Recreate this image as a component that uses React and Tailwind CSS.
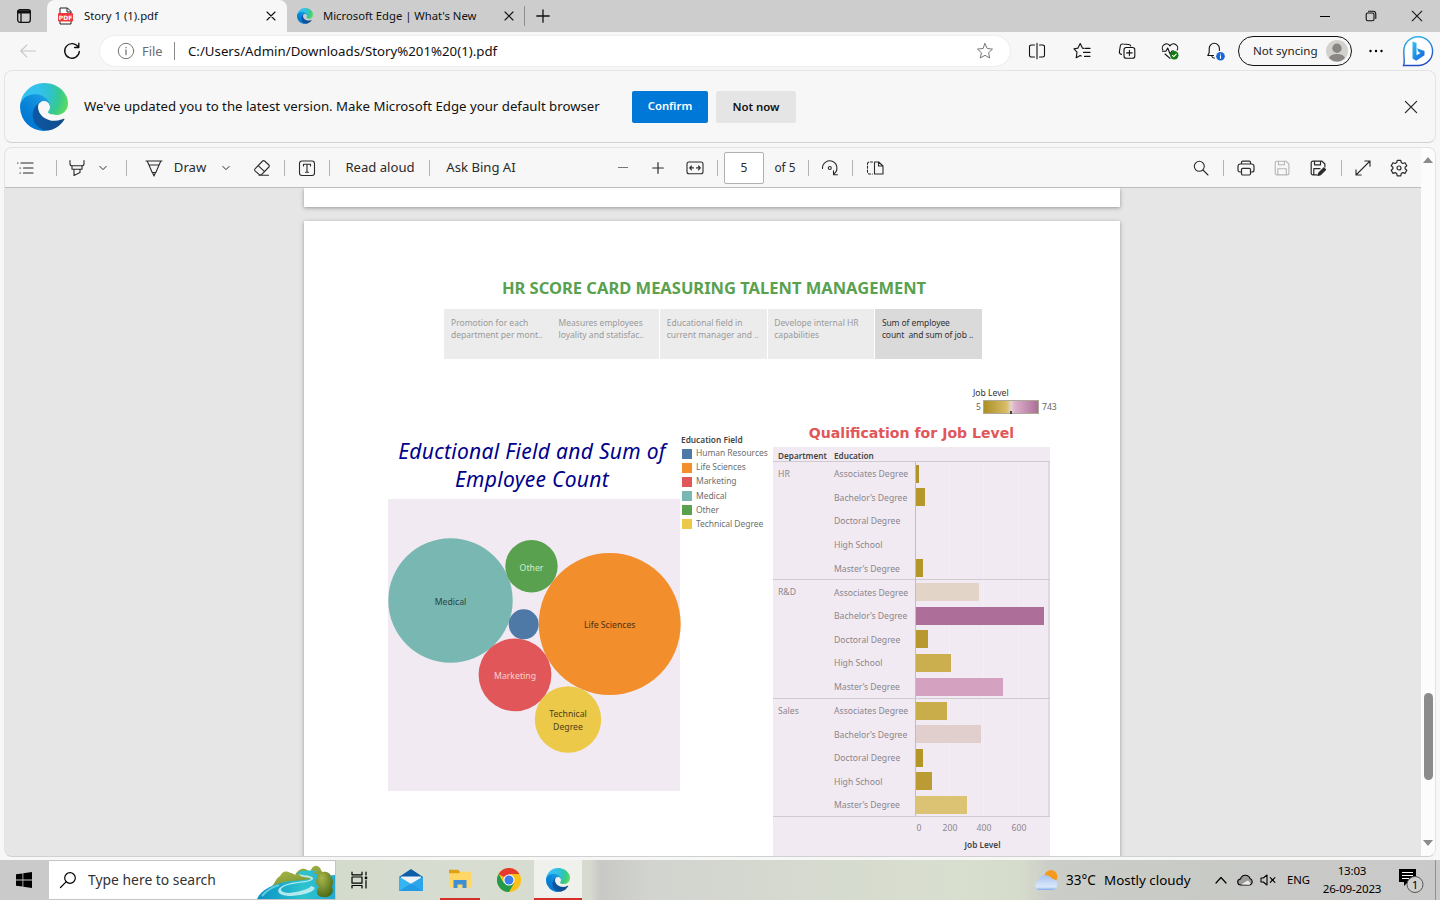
import React from "react";

function Ico({ s = 18, vb = 18, w = 1.1, className = "", children }) {
  return (
    <svg width={s} height={s} viewBox={`0 0 ${vb} ${vb}`} fill="none" stroke="currentColor" strokeWidth={w} strokeLinecap="round" strokeLinejoin="round" className={`shrink-0 ${className}`}>
      {children}
    </svg>
  );
}

function Cell({ className = "", children }) {
  return <div className={`flex shrink-0 items-center justify-center whitespace-nowrap ${className}`}>{children}</div>;
}

function Sep({ className = "" }) {
  return (
    <Cell className={className}>
      <div className="h-4 w-px bg-[#b4b4b4]" />
    </Cell>
  );
}

function EdgeLogo({ size, id }) {
  return (
    <svg width={size} height={size} viewBox="0 0 256 256" className="shrink-0">
      <defs>
        <linearGradient id={`${id}a`} x1="63" y1="177" x2="241" y2="177" gradientUnits="userSpaceOnUse">
          <stop offset="0" stopColor="#0c59a4" />
          <stop offset="1" stopColor="#114a8b" />
        </linearGradient>
        <linearGradient id={`${id}b`} x1="157" y1="100" x2="46" y2="222" gradientUnits="userSpaceOnUse">
          <stop offset="0" stopColor="#1b9de2" />
          <stop offset=".16" stopColor="#1595df" />
          <stop offset=".67" stopColor="#0680d7" />
          <stop offset="1" stopColor="#0078d4" />
        </linearGradient>
        <radialGradient id={`${id}c`} cx="26" cy="47" r="240" gradientUnits="userSpaceOnUse">
          <stop offset="0" stopColor="#35c1f1" />
          <stop offset=".3" stopColor="#34c1ed" />
          <stop offset=".55" stopColor="#2fc2cf" />
          <stop offset=".78" stopColor="#36c98f" />
          <stop offset="1" stopColor="#5fdc5c" />
        </radialGradient>
      </defs>
      <path fill={`url(#${id}a)`} d="M231.07 190.54c-3.4 1.8-6.9 3.35-10.53 4.7a101.8 101.8 0 01-35.9 6.46c-47.31 0-88.54-32.54-88.54-74.32A31.48 31.48 0 01112.5 100c-42.8 1.8-53.8 46.4-53.8 72.53 0 73.88 68.1 81.37 82.76 81.37 7.91 0 19.84-2.3 27-4.56l1.31-.44a128.34 128.34 0 0066.6-52.8 4 4 0 00-5.3-5.56z" />
      <path fill={`url(#${id}b)`} d="M105.73 241.42a79.2 79.2 0 01-22.74-21.34 80.72 80.72 0 0129.54-120.27c3.12-1.48 8.45-4.1 15.54-4a32.36 32.36 0 0125.69 13 31.9 31.9 0 016.36 18.67c0-.21 24.46-79.6-80-79.6-43.9 0-80 41.66-80 78.2a130.15 130.15 0 0012.11 56 128 128 0 00156.38 67.1 75.55 75.55 0 01-62.78-8z" />
      <path fill={`url(#${id}c)`} d="M152.33 149c-.81 1.07-3.3 2.5-3.3 5.68 0 2.6 1.7 5.1 4.7 7.2 14.4 10 41.5 8.7 41.5 8.7a59.56 59.56 0 0030.3-8.36A61.38 61.38 0 00256 109.19c.26-22.4-8-37.3-11.32-43.93C223.5 23.98 177.8 0 128.1 0A128 128 0 000 126.2c.48-36.54 36.8-66.05 80-66.05 3.5 0 23.46.34 42 10.07 16.34 8.58 24.9 18.94 30.85 29.21 6.18 10.67 7.28 24.15 7.28 29.52s-2.74 13.33-7.8 20.05z" />
    </svg>
  );
}

const Close = ({ s = 10, w = 1.1 }) => (
  <Ico s={s} vb={10} w={w}><path d="M1 1l8 8M9 1L1 9" /></Ico>
);

function TabStrip() {
  return (
    <div className="flex h-8 items-stretch bg-[#cdcdcd] text-[11.3px] text-[#111]">
      <Cell className="w-[47px]">
        <Ico s={16} vb={16} w={1.3}>
          <rect x="1.7" y="1.7" width="12.6" height="12.6" rx="2.2" />
          <path d="M2 3.2h12M2 4.6h12" strokeWidth="2" />
          <path d="M5 5v9" />
        </Ico>
      </Cell>
      <div className="flex w-[240px] items-center rounded-t-lg bg-[#f7f7f7] pl-[10px]">
        <svg width="17" height="18" viewBox="0 0 17 18" className="shrink-0">
          <path d="M3 7V1h7.5l3.5 3.5V17H3z" fill="#fff" stroke="#222" />
          <path d="M10 1v4h4" fill="none" stroke="#222" />
          <rect x="1" y="6" width="15" height="8.5" rx="1" fill="#f0383c" />
          <text x="8.5" y="12.6" textAnchor="middle" fontSize="6" fontWeight="700" fill="#fff" fontFamily="DejaVu Sans">PDF</text>
        </svg>
        <span className="ml-[10px] w-[182px] whitespace-nowrap">Story 1 (1).pdf</span>
        <Close />
      </div>
      <div className="flex w-[238px] items-center pl-[10px]">
        <EdgeLogo size={16} id="t" />
        <span className="ml-[10px] w-[182px] whitespace-nowrap tracking-[-0.02px]">Microsoft Edge | What's New</span>
        <Close />
        <div className="ml-[10px] h-5 w-px bg-[#8d8d8d]" />
      </div>
      <Cell className="w-9">
        <Ico s={14} vb={14} w={1.3}><path d="M7 .8v12.4M.8 7h12.4" /></Ico>
      </Cell>
      <div className="ml-auto flex">
        <Cell className="w-[46px]"><div className="h-px w-[10px] bg-black" /></Cell>
        <Cell className="w-[46px]">
          <Ico s={12} vb={12} w={1.1}>
            <rect x="1.2" y="3" width="7.8" height="7.8" rx="1.5" />
            <path d="M3.5 1.2H8A2.8 2.8 0 0 1 10.8 4v4.5" />
          </Ico>
        </Cell>
        <Cell className="w-[46px]"><Close s={12} w={0.9} /></Cell>
      </div>
    </div>
  );
}

function AddressRow() {
  return (
    <div className="flex h-[38px] items-center bg-[#f7f7f7]">
      <Cell className="w-14 text-[#c6c6c6]"><Ico s={18}><path d="M16.5 9H2M8 2.8L1.8 9 8 15.2" /></Ico></Cell>
      <Cell className="w-8 text-[#111]">
        <Ico s={18} w={1.4}><path d="M15.3 5.2A7.3 7.3 0 1 0 16.3 9.5M15.8 1.3v4.2h-4.2" /></Ico>
      </Cell>
      <div className="ml-3 flex h-[30px] w-[910px] items-center rounded-full bg-white shadow-[0_0_2px_rgba(0,0,0,0.12)]">
        <Ico s={18} w={1} className="ml-[17px] text-[#767676]">
          <circle cx="9" cy="9" r="7.7" />
          <path d="M9 8v4.7M9 5.4v.3" strokeWidth="1.3" />
        </Ico>
        <span className="ml-[7px] w-8 pt-px text-[12.8px] text-[#6b6b6b]">File</span>
        <div className="h-[18px] w-px bg-[#8a8a8a]" />
        <span className="ml-[13px] pt-px text-[13.25px] whitespace-nowrap text-[#111]">C:/Users/Admin/Downloads/Story%201%20(1).pdf</span>
        <Ico s={18} w={1} className="mr-4 ml-auto text-[#767676]">
          <path d="M9 1.6l2.2 4.9 5.3.6-3.9 3.6 1.1 5.3L9 13.3 4.3 16l1.1-5.3L1.5 7.1l5.3-.6z" />
        </Ico>
      </div>
      <div className="ml-[5px] flex text-[#111]">
        <Cell className="w-11">
          <Ico s={18}><path d="M6.5 3H3.2A1.7 1.7 0 0 0 1.5 4.7v8.6A1.7 1.7 0 0 0 3.2 15h3.3M11.5 3h3.3a1.7 1.7 0 0 1 1.7 1.7v8.6a1.7 1.7 0 0 1-1.7 1.7h-3.3M9 1.2v15.6" /></Ico>
        </Cell>
        <Cell className="w-[46px]">
          <Ico s={18}><path d="M11.2 6.4l-1.8-.3L7.2 1.6 5 6.1l-4 .7 3 3.4-.8 5.6 4-2.2 1 .5M12.5 6.4H17M10.5 10.4H17M11.5 14.4H17" /></Ico>
        </Cell>
        <Cell className="w-[43px]">
          <Ico s={18}><rect x="6" y="5.5" width="10.8" height="10.8" rx="2.3" /><path d="M11.4 8.2v5.4M8.7 10.9h5.4M3.5 12.4A2.5 2.5 0 0 1 1.4 9.6L2.3 4a2.4 2.4 0 0 1 2.8-2l5.6.5a2.3 2.3 0 0 1 2 1.5" /></Ico>
        </Cell>
        <Cell className="w-11">
          <Ico s={18}>
            <path d="M1.8 8A4 4 0 0 1 9 4a4 4 0 0 1 7.2 4M1.5 9.3h3.4L6.7 6l2.4 6 1.8-3h2M4 12l5 4.4" />
            <circle cx="13.3" cy="13.3" r="4.2" fill="#107c10" stroke="none" />
            <path d="M11.5 13.5l1.3 1.2 2.4-2.6" stroke="#fff" />
          </Ico>
        </Cell>
        <Cell className="w-[46px]">
          <Ico s={20} vb={20}>
            <path d="M8.5 14.5H2.8l1.4-3V7.4a5.1 5.1 0 0 1 10.2 0v2M6.8 15a2.4 2.4 0 0 0 2.6 2" />
            <circle cx="15.5" cy="15.2" r="4.3" fill="#1a66d6" stroke="none" />
            <path d="M15.5 14.8v2.4M15.5 13v.1" stroke="#fff" />
          </Ico>
        </Cell>
      </div>
      <div className="flex h-[30px] w-[114px] items-center rounded-full border border-[#111] pl-[14px] text-[11.6px] text-[#222]">
        <span className="w-[73px] whitespace-nowrap">Not syncing</span>
        <svg width="22" height="22" viewBox="0 0 22 22" className="shrink-0">
          <defs><clipPath id="av"><circle cx="11" cy="11" r="10.5" /></clipPath></defs>
          <circle cx="11" cy="11" r="11" fill="#d3d1ce" />
          <g clipPath="url(#av)" fill="#8a8684"><circle cx="11" cy="8.2" r="4.7" /><ellipse cx="11" cy="18.6" rx="8" ry="4.6" /></g>
        </svg>
      </div>
      <Cell className="w-12"><Ico s={16} vb={16}><g fill="currentColor" stroke="none"><circle cx="2.5" cy="8" r="1.2" /><circle cx="8" cy="8" r="1.2" /><circle cx="13.5" cy="8" r="1.2" /></g></Ico></Cell>
      <Cell className="ml-[2px] w-8">
        <svg width="32" height="32" viewBox="0 0 32 32">
          <defs>
            <linearGradient id="bo" x1="0" y1="0" x2=".3" y2="1"><stop offset="0" stopColor="#2fc0ea" /><stop offset="1" stopColor="#2349c9" /></linearGradient>
            <linearGradient id="bi" x1="0" y1="0" x2="1" y2="1"><stop offset="0" stopColor="#36c5f3" /><stop offset=".5" stopColor="#1c8fe6" /><stop offset="1" stopColor="#1f5fe0" /></linearGradient>
          </defs>
          <path d="M1.5 30.5c1.5-3 .3-6 .3-14.5A14.4 14.4 0 1 1 16.2 30.5z" fill="#fff" stroke="url(#bo)" strokeWidth="1.4" />
          <path d="M10.5 6.5l4 1.4v12.4l4-2.3-2-1-1.5-3.8 7.5 2.7v4.3L14.2 25.8l-3.7-2.4z" fill="url(#bi)" />
        </svg>
      </Cell>
    </div>
  );
}

function Banner() {
  return (
    <div className="mx-1 flex h-[73px] w-[1432px] items-center rounded-lg border border-[#e3e3e3] border-b-[#d2d2d2] bg-[#f7f7f7] pl-[15px]">
      <EdgeLogo size={48} id="b" />
      <span className="ml-4 w-[548px] text-[13.22px] whitespace-nowrap text-[#111]">We've updated you to the latest version. Make Microsoft Edge your default browser</span>
      <button className="h-8 w-[76px] rounded-[2px] bg-[#0078d7] text-[11.3px] font-semibold text-white">Confirm</button>
      <button className="ml-2 h-8 w-20 rounded-[2px] bg-[#e5e5e5] text-[11.4px] font-semibold text-[#111]">Not now</button>
      <Cell className="mr-[17px] ml-auto text-[#222]"><Close s={14} w={0.85} /></Cell>
    </div>
  );
}

const Chevron = () => <Ico s={8} vb={8} w={1}><path d="M.8 2.4L4 5.6l3.2-3.2" /></Ico>;

function PdfToolbar() {
  return (
    <div className="flex h-10 shrink-0 items-stretch border-b border-[#bdbdbd] bg-[#f7f7f7] pr-[6px] text-[13.1px] text-[#2b2b2b]">
      <Cell className="w-[43px]"><Ico s={18} w={1.2} className="-ml-1"><path d="M5 4h12M7.5 9H17M7.5 14H17M1.5 4h.4M4 9h.4M4 14h.4" /></Ico></Cell>
      <Sep className="w-4" />
      <Cell className="w-[26px]"><Ico s={18}><path d="M2 1.5v3.2a2 2 0 0 0 2 2h10a2 2 0 0 0 2-2V1.5M4 6.7v3.6h10V6.7M6 10.3v6.2l6-3v-3.2" /></Ico></Cell>
      <Cell className="w-[26px]"><Chevron /></Cell>
      <Sep className="w-5" />
      <Cell className="w-9"><Ico s={18}><path d="M1 2h16M2.2 2l5 11.5h3.6l5-11.5M4 6h10M7.5 13.5L9 17l1.5-3.5" /></Ico></Cell>
      <Cell className="w-9">Draw</Cell>
      <Cell className="w-9"><Chevron /></Cell>
      <Cell className="w-9"><Ico s={18}><path d="M6 16.2h9.5M6.3 15.7L2 11.8a1.4 1.4 0 0 1 0-2L9.6 2a1.4 1.4 0 0 1 2 0l4.3 4a1.4 1.4 0 0 1 0 2L8.5 15.7zM5.2 6.6l6.4 6" /></Ico></Cell>
      <Sep className="w-2" />
      <Cell className="w-[38px]"><Ico s={18}><rect x="1.5" y="2" width="15" height="14.5" rx="2.5" /><path d="M5.5 7V5.3h7V7M9 5.3v8M7.5 13.3h3" /></Ico></Cell>
      <Sep className="w-[6px]" />
      <Cell className="w-[96px]">Read aloud</Cell>
      <Sep className="w-[2px]" />
      <Cell className="w-[102px]">Ask Bing AI</Cell>
      <Cell className="ml-[73px] w-9"><div className="h-[1.5px] w-[10px] bg-[#777]" /></Cell>
      <Cell className="w-[34px]"><Ico s={12} vb={12} w={1.2}><path d="M6 .7v10.6M.7 6h10.6" /></Ico></Cell>
      <Cell className="w-10"><Ico s={18} w={1.1}><rect x="1" y="3" width="16" height="11.8" rx="2" /><path d="M3.8 8.9h3.7M10.5 8.9h3.7M5.5 7L3.7 8.9l1.8 1.9M12.5 7l1.8 1.9-1.8 1.9" /></Ico></Cell>
      <Sep className="w-1" />
      <Cell className="ml-[5px] w-10"><div className="flex h-8 w-10 items-center justify-center rounded-[2px] border border-[#b0b0b0] bg-white text-[12px]">5</div></Cell>
      <Cell className="w-[42px] text-[11.8px]">of 5</Cell>
      <Sep className="w-1" />
      <Cell className="w-10"><Ico s={18}><path d="M1.5 9.5A7.2 7.2 0 1 1 12.8 15M12.5 11.8v4h4" /><circle cx="8.8" cy="9" r="1.5" /></Ico></Cell>
      <Sep className="w-1" />
      <Cell className="w-[42px]"><Ico s={18}><path d="M8.5 3h4.2L17 7v8H8.5zM12.5 3v4H17" /><path d="M6.5 3H3.2A1.7 1.7 0 0 0 1.5 4.7v8.6A1.7 1.7 0 0 0 3.2 15h3.3" strokeDasharray="2.2 1.8" /></Ico></Cell>
      <div className="ml-auto flex">
        <Cell className="w-10"><Ico s={16} vb={16}><circle cx="6.3" cy="6.3" r="5" /><path d="M10 10l5 5" /></Ico></Cell>
        <Sep className="w-1" />
        <Cell className="w-[42px]"><Ico s={18} w={1.2}><path d="M4.5 5V3.5A1.3 1.3 0 0 1 5.8 2.2h6.4a1.3 1.3 0 0 1 1.3 1.3V5M4.5 13H3a2 2 0 0 1-2-2V7.2A2.2 2.2 0 0 1 3.2 5h11.6A2.2 2.2 0 0 1 17 7.2V11a2 2 0 0 1-2 2h-1.5" /><rect x="4.5" y="9.3" width="9" height="6.7" rx="1.2" /></Ico></Cell>
        <Cell className="w-[30px] text-[#b5b5b5]"><Ico s={18}><path d="M2.2 3.9a1.7 1.7 0 0 1 1.7-1.7H13L15.9 5v9.2a1.7 1.7 0 0 1-1.7 1.7H3.9a1.7 1.7 0 0 1-1.7-1.7zM5.5 2.2v3.6h6V2.2M4.8 15.9V9.7h8.5v6.2" /></Ico></Cell>
        <Cell className="w-[42px]"><Ico s={18} w={1.2}><path d="M8 15.9H3.9a1.7 1.7 0 0 1-1.7-1.7V3.9a1.7 1.7 0 0 1 1.7-1.7H13L15.9 5v3M5.5 2.2v3.6h6V2.2M4.8 15.9V9.7h6.2" /><path d="M9 16.5l.8-2.6 5-5 1.8 1.8-5 5z" fill="currentColor" /></Ico></Cell>
        <Sep className="w-1" />
        <Cell className="w-10"><Ico s={18}><path d="M2 16L16 2M10.8 2H16v5.2M2 10.8V16h5.2" /></Ico></Cell>
        <Cell className="w-8"><Ico s={18} w={1.2}><circle cx="9" cy="9" r="2" /><path d="M7.2 1.3h3.6l.5 2.3 1.5.9 2.2-.8 1.8 3.1-1.7 1.5v1.5l1.7 1.5-1.8 3.1-2.2-.8-1.5.9-.5 2.3H7.2l-.5-2.3-1.5-.9-2.2.8-1.8-3.1 1.7-1.5V8.3L1.2 6.8 3 3.7l2.2.8 1.5-.9z" /></Ico></Cell>
      </div>
    </div>
  );
}

const story = [
  ["Promotion for each", "department per mont.."],
  ["Measures employees", "loyality and statisfac.."],
  ["Educational field in", "current manager and .."],
  ["Develope internal HR", "capabilities"],
  ["Sum of employee", "count  and sum of job .."],
];

function StoryPoints() {
  return (
    <div className="ml-[140px] flex h-[50px] w-[538px] text-[8.5px] leading-3 text-[#9a9a9a]">
      {story.map(([a, b], i) => (
        <div
          key={a}
          className={`w-[107.6px] shrink-0 pt-2 whitespace-pre ${i === 4 ? "border-l border-white bg-[#dadada] pl-[6.5px] tracking-[-0.1px] text-[#333]" : i > 1 ? "border-l border-white bg-[#ececec] pl-[6.5px]" : "bg-[#ececec] pl-[7px]"}`}
        >
          {a}
          <br />
          {b}
        </div>
      ))}
    </div>
  );
}

const bubbles = [
  { x: 62.5, y: 101.5, r: 62.2, c: "#78b7b2", t: ["Medical"], f: "#2c4341" },
  { x: 143.5, y: 67.3, r: 26.2, c: "#59a14f", t: ["Other"], f: "#d3ecd0" },
  { x: 135.7, y: 125.3, r: 15, c: "#4e79a7", t: [], f: "" },
  { x: 221.7, y: 125, r: 71, c: "#f28e2c", t: ["Life Sciences"], f: "#50300f" },
  { x: 127, y: 175.8, r: 36.4, c: "#e15759", t: ["Marketing"], f: "#f9d0d0" },
  { x: 180, y: 220.5, r: 33.2, c: "#ecc948", t: ["Technical", "Degree"], f: "#4c4118" },
];

function BubbleChart() {
  return (
    <div className="w-[292px] shrink-0 pt-[51px]">
      <h2 className="h-[62px] pr-1 text-center text-[21px] leading-7 tracking-[0.3px] text-[#00008b] italic">
        <span className="-mx-4 block whitespace-nowrap">Eductional Field and Sum of<br />Employee Count</span>
      </h2>
      <svg width="293" height="292" viewBox="0 0 293 292" className="block overflow-visible" fontFamily="'Noto Sans', sans-serif" fontSize="8.7">
        <rect width="292" height="292" fill="#f2eaf2" />
        {bubbles.map((b) => (
          <g key={b.c}>
            <circle cx={b.x} cy={b.y} r={b.r} fill={b.c} />
            {b.t.map((t, i) => (
              <text key={t} x={b.x} y={b.y + 4.3 + (b.t.length > 1 ? i * 13 - 7 : 0)} textAnchor="middle" fill={b.f}>{t}</text>
            ))}
          </g>
        ))}
      </svg>
    </div>
  );
}

const fields = [
  ["Human Resources", "bg-[#4e79a7]"],
  ["Life Sciences", "bg-[#f28e2c]"],
  ["Marketing", "bg-[#e15759]"],
  ["Medical", "bg-[#78b7b2]"],
  ["Other", "bg-[#59a14f]"],
  ["Technical Degree", "bg-[#ecc948]"],
];

function FieldLegend() {
  return (
    <div className="w-[93px] shrink-0 pt-[48px] pl-px text-[8.5px] whitespace-nowrap text-[#6e6e6e]">
      <div className="h-[12px] text-[8.3px] leading-[12px] font-semibold text-[#444]">Education Field</div>
      {fields.map(([name, color]) => (
        <div key={name} className="flex h-[14.1px] items-center pt-px pl-px">
          <div className={`h-[10px] w-[10px] ${color}`} />
          <span className="ml-[4px] leading-none tracking-[-0.06px]">{name}</span>
        </div>
      ))}
    </div>
  );
}

const degrees = ["Associates Degree", "Bachelor’s Degree", "Doctoral Degree", "High School", "Master’s Degree"];
const groups = [
  { name: "HR", bars: [[3, "#ae942c"], [9, "#b5982c"], [0, "#b3b3a8"], [0, "#b3b3a8"], [7, "#b4972b"]] },
  { name: "R&D", bars: [[63, "#e2d4c6"], [128, "#ad6f99"], [12, "#b8992f"], [35, "#cbaf4e"], [87, "#d4a1c1"]] },
  { name: "Sales", bars: [[31, "#c9ad4b"], [65, "#e1cfcd"], [7, "#b49628"], [16, "#bb9c34"], [51, "#dcc273"]] },
];

function QualificationChart() {
  return (
    <div className="w-[290px] shrink-0 text-[8.65px] whitespace-nowrap text-[#8b868c]">
      <div className="h-[36px] pl-[200px]">
        <div className="h-[14px] text-[8.6px] leading-[14px] text-[#333]">Job Level</div>
        <div className="flex h-[14px] items-center leading-none text-[#666]">
          <span className="w-[10px] pl-[3px]">5</span>
          <div className="relative h-[14px] w-[56px] border border-[#aca99b] bg-[linear-gradient(90deg,#ac8f24,#d9bd68_42%,#e4d5d0_50%,#dbaecb_58%,#ad6f99)]">
            <div className="absolute bottom-[-1px] left-[26px] h-[3px] w-[2px] bg-[#444]" />
          </div>
          <span className="ml-[3px]">743</span>
        </div>
      </div>
      <h2 className="h-[25px] w-[277px] text-center font-['DejaVu_Sans'] text-[14.1px] leading-[22px] font-bold text-[#e15759]">Qualification for Job Level</h2>
      <div className="w-[277px] bg-[#f2eaf2] pb-8">
        <div className="flex h-[14px] pt-[2px] pl-[5px] text-[8.2px] leading-[13px] font-semibold text-[#444]">
          <span className="w-[56px]">Department</span>
          <span>Education</span>
        </div>
        {groups.map((g) => (
          <div key={g.name} className="flex h-[118.4px] border-t border-[#cfcacf]">
            <div className="w-[61px] pt-[6px] pl-[5px] leading-[13px]">{g.name}</div>
            <div className="w-[81px]">
              {degrees.map((d) => (
                <div key={d} className="flex h-[23.6px] items-center pt-[2px]">{d}</div>
              ))}
            </div>
            <div className="w-[135px] border-r-2 border-l border-r-[#e0d9e0] border-l-[#c2bcc2] bg-[linear-gradient(90deg,transparent_33px,#f4edf4_33px,#f4edf4_34px,transparent_34px,transparent_67px,#f4edf4_67px,#f4edf4_68px,transparent_68px,transparent_102px,#f4edf4_102px,#f4edf4_103px,transparent_103px)]">
              {g.bars.map(([w, c], i) => (
                <div key={i} className="flex h-[23.6px] items-center">
                  <div className="h-[18px]" style={{ width: w, background: c }} />
                </div>
              ))}
            </div>
          </div>
        ))}
        <div className="flex border-t border-[#cfcacf] pt-[5px] pl-[129px] leading-[13px]">
          <span className="w-[34px] text-center">0</span>
          <span className="w-[28px] text-center">200</span>
          <span className="ml-[6px] w-[28px] text-center">400</span>
          <span className="ml-[7px] w-[28px] text-center">600</span>
        </div>
        <div className="pt-[3px] pl-[142px] text-center text-[8.3px] leading-[13px] font-semibold text-[#444]">Job Level</div>
      </div>
    </div>
  );
}

function Viewer() {
  return (
    <div className="mx-1 mt-1 flex h-[710px] w-[1432px] shrink-0 overflow-hidden rounded-lg border border-[#e3e3e3] border-b-[#d0d0d0] bg-[#e6e6e6]">
      <div className="flex w-[1416px] flex-col">
        <PdfToolbar />
        <div className="flex grow flex-col overflow-hidden pl-[299px] font-['Noto_Sans',sans-serif]">
          <div className="h-[19px] w-[816px] shrink-0 bg-white shadow-[0_1px_4px_rgba(0,0,0,0.35)]" />
          <div className="mt-[14px] h-[1000px] w-[816px] shrink-0 bg-white shadow-[0_1px_4px_rgba(0,0,0,0.35)]">
            <h1 className="pt-[53px] pl-[4px] text-center text-[16.5px] leading-[27px] font-bold text-[#59a14f]">HR SCORE CARD MEASURING TALENT MANAGEMENT</h1>
            <div className="h-[8px]" />
            <StoryPoints />
            <div className="mt-[27px] ml-[84px] flex">
              <BubbleChart />
              <FieldLegend />
              <QualificationChart />
            </div>
          </div>
        </div>
      </div>
      <div className="flex w-[14px] flex-col items-center bg-[#fcfcfc]">
        <svg width="10" height="6" viewBox="0 0 10 6" className="mt-[9px] shrink-0"><path d="M0 6l5-6 5 6z" fill="#8b8b8b" /></svg>
        <div className="mt-[530px] h-[87px] w-[9px] shrink-0 rounded-full bg-[#8b8b8b]" />
        <svg width="10" height="6" viewBox="0 0 10 6" className="mt-[60px] shrink-0"><path d="M0 0l5 6 5-6z" fill="#8b8b8b" /></svg>
      </div>
    </div>
  );
}

function Taskbar() {
  return (
    <div className="mt-[3px] flex h-10 shrink-0 items-stretch bg-[linear-gradient(90deg,#cacaca_0,#cacaca_335px,#d3dbcc_336px,#d8ddd2_480px,#d6dacf_590px,#c8c9c6_600px,#d2d4cf_650px,#d9dfcf_960px,#d6dccb_1020px,#cbcdc8_1050px,#c8cac6_1200px,#c9c9c9_1440px)] text-black">
      <Cell className="w-[49px]">
        <svg width="16" height="16" viewBox="0 0 16 16" className="-ml-[2px]"><path d="M0 2.3l6.500-.9v6.200H0zM7.300 1.300L16 0v7.600H7.300zM0 8.400h6.500v6.200L0 13.700zM7.300 8.400H16V16l-8.700-1.300z" /></svg>
      </Cell>
      <div className="flex w-[287px] items-center overflow-hidden border border-l-0 border-[#c4c4c4] bg-white">
        <Ico s={18} className="ml-[10px]" w={1.2}><circle cx="11" cy="7" r="5.3" /><path d="M7.3 10.7L1.5 16.5" /></Ico>
        <span className="ml-[11px] pt-px text-[13.9px] whitespace-nowrap text-[#333]">Type here to search</span>
        <svg width="78" height="38" viewBox="0 0 78 38" className="ml-auto shrink-0">
          <defs>
            <linearGradient id="hill" x1="0" y1="0" x2="0.6" y2="1"><stop offset="0" stopColor="#b5c04c" /><stop offset="1" stopColor="#6b8a2c" /></linearGradient>
            <linearGradient id="riv" x1="0" y1="0" x2="1" y2="0"><stop offset="0" stopColor="#0a8fc4" /><stop offset=".6" stopColor="#2cc4cf" /><stop offset="1" stopColor="#23a9d0" /></linearGradient>
            <radialGradient id="bush" cx=".35" cy=".25" r=".8"><stop offset="0" stopColor="#a9b649" /><stop offset="1" stopColor="#4c6a17" /></radialGradient>
          </defs>
          <path d="M38 14c3-6 10-9 14-3l-6 8z" fill="#8fa63c" />
          <path d="M14 26c3-2 5-9 9-11 3-6 7-5 11-3 4 1 6 4 10 4l8-2c2-6 4-10 8-9 4 1 4 5 7 9l6 4v12H14z" fill="url(#hill)" />
          <path d="M78 14v24H0c4-10 18-16 34-18 10-1 21-1 22-4 0-2-15-1-15-4s12-3 20-2c-9 2 0 3 4 5z" fill="url(#riv)" />
          <path d="M42 13c4 2 15 1 14 5-2 4-17 3-28 7-7 3-4 7 4 7 9-1 21-4 22-7 10 2-2 9-20 10-12 0-16-5-10-9 8-6 28-5 30-8 0-2-12-1-12-5z" fill="#b4e9ee" />
          <path d="M5 35c5-6 10-9 17-11" fill="none" stroke="#5ccbdc" strokeWidth="2" />
          <path d="M60 17c-1-7 13-9 14-1 3 3 2 7 1 10 3 7-3 11-9 10-6 0-8-6-4-10-3-3-4-5-2-9z" fill="url(#bush)" />
        </svg>
      </div>
      <Cell className="w-12">
        <Ico s={18} w={1.2}><path d="M1 1.2v2.6h10V1.2M1 17v-2.5h10V17M1 6h10v6.2H1zM15 1v3M15 9.5V17" /><path d="M13.8 5.6h2.4v2.6h-2.4z" fill="currentColor" stroke="none" /></Ico>
      </Cell>
      <Cell className="w-[54px]">
        <svg width="24" height="24" viewBox="0 0 24 24">
          <path d="M0 9L12 1l12 8v4H0z" fill="#0a5fa8" /><path d="M2 8.5h20V18H2z" fill="#eef3f8" />
          <path d="M0 8.5l13 8L0 23z" fill="#35b4f2" /><path d="M24 8.5L0 23h24z" fill="#2ba5ec" /><path d="M12 15.8L24 23H0z" fill="#1c8fdc" opacity=".5" />
        </svg>
      </Cell>
      <Cell className="ml-[2px] w-10 border-b-[2px] border-[#d32f2b]">
        <svg width="22" height="20" viewBox="0 0 22 20"><path d="M0 .8h9l2 2.2h11V18H0z" fill="#e0a010" /><path d="M0 4.3h10l1.5-1.5H22V18.5H0z" fill="#ffd767" /><path d="M4.5 11h13v8h-4v-3.5h-5V19h-4z" fill="#3f8fd6" /></svg>
      </Cell>
      <Cell className="w-[57px]">
        <svg width="24" height="24" viewBox="0 0 24 24">
          <circle cx="12" cy="12" r="12" fill="#fbc116" />
          <path d="M12 12L1.6 6A12 12 0 0 1 22.4 6H12z" fill="#e33b2e" />
          <path d="M1.6 6A12 12 0 0 0 12 24l5.2-9L12 12l-5.2 3z" fill="#229a4b" />
          <circle cx="12" cy="12" r="5.6" fill="#fff" /><circle cx="12" cy="12" r="4.5" fill="#3b7ded" />
        </svg>
      </Cell>
      <Cell className="-ml-[3px] w-12 border-b-[2px] border-[#d32f2b] bg-[#f0f1ed] pt-[2px]"><EdgeLogo size={24} id="k" /></Cell>
      <div className="ml-auto flex items-center whitespace-nowrap">
        <svg width="25" height="22" viewBox="0 0 25 22" className="shrink-0">
          <defs><linearGradient id="cl" x1="0" y1="0" x2="0" y2="1"><stop offset="0" stopColor="#a9c4f0" /><stop offset=".8" stopColor="#dbe8fb" /><stop offset="1" stopColor="#7fa8ea" /></linearGradient></defs>
          <circle cx="17" cy="7.5" r="6.5" fill="#f59a1b" />
          <path d="M5 21a5 5 0 0 1-.5-9.5A7.5 7.5 0 0 1 18 9.8 5.7 5.7 0 0 1 19 21z" fill="url(#cl)" />
        </svg>
        <span className="ml-[7px] w-[38px] text-[13.5px]">33°C</span>
        <span className="w-[111px] text-[13.4px]">Mostly cloudy</span>
        <Ico s={12} vb={12} w={1.2}><path d="M1 9l5-5.5L11 9" /></Ico>
        <Ico s={16} vb={16} w={1.1} className="ml-[10px]"><path d="M4 13a3 3 0 0 1-.5-6A5 5 0 0 1 13 6.5 3.4 3.4 0 0 1 12.5 13z" fill="#9b9b9b" /><path d="M4 12.5l7-4 2.5 3-1 1.2z" fill="#eee" stroke="none" /></Ico>
        <Ico s={16} vb={16} w={1.1} className="ml-[7px]"><path d="M1 6v4h2.3L7 13V3L3.3 6zM10.3 5.7l4.6 4.6M14.9 5.7l-4.6 4.6" /></Ico>
        <span className="ml-[11px] w-[35px] text-[11.3px]">ENG</span>
        <div className="w-[60px] text-center text-[11.6px] leading-[18px] tracking-[-0.2px]">
          <div>13:03</div>
          <div>26-09-2023</div>
        </div>
        <svg width="26" height="26" viewBox="0 0 26 26" className="ml-[16px] shrink-0">
          <path d="M1 2h17v13H10l-4 4v-4H1z" fill="#000" /><path d="M4 5.5h11M4 8.5h11M4 11.5h7" stroke="#fff" strokeWidth="1" />
          <circle cx="17" cy="17.5" r="8" fill="#cfcfcf" stroke="#555" strokeWidth="1" />
          <text x="17" y="21.8" textAnchor="middle" fontSize="11.5" fontFamily="'Noto Sans', sans-serif">1</text>
        </svg>
        <div className="mr-1 ml-[11px] h-10 w-px bg-[#909090]" />
      </div>
    </div>
  );
}

export default function App() {
  return (
    <div className="flex h-[900px] w-[1440px] flex-col overflow-hidden bg-[#f7f7f7] font-['Noto_Sans','Open_Sans',sans-serif]">
      <TabStrip />
      <AddressRow />
      <Banner />
      <Viewer />
      <Taskbar />
    </div>
  );
}
